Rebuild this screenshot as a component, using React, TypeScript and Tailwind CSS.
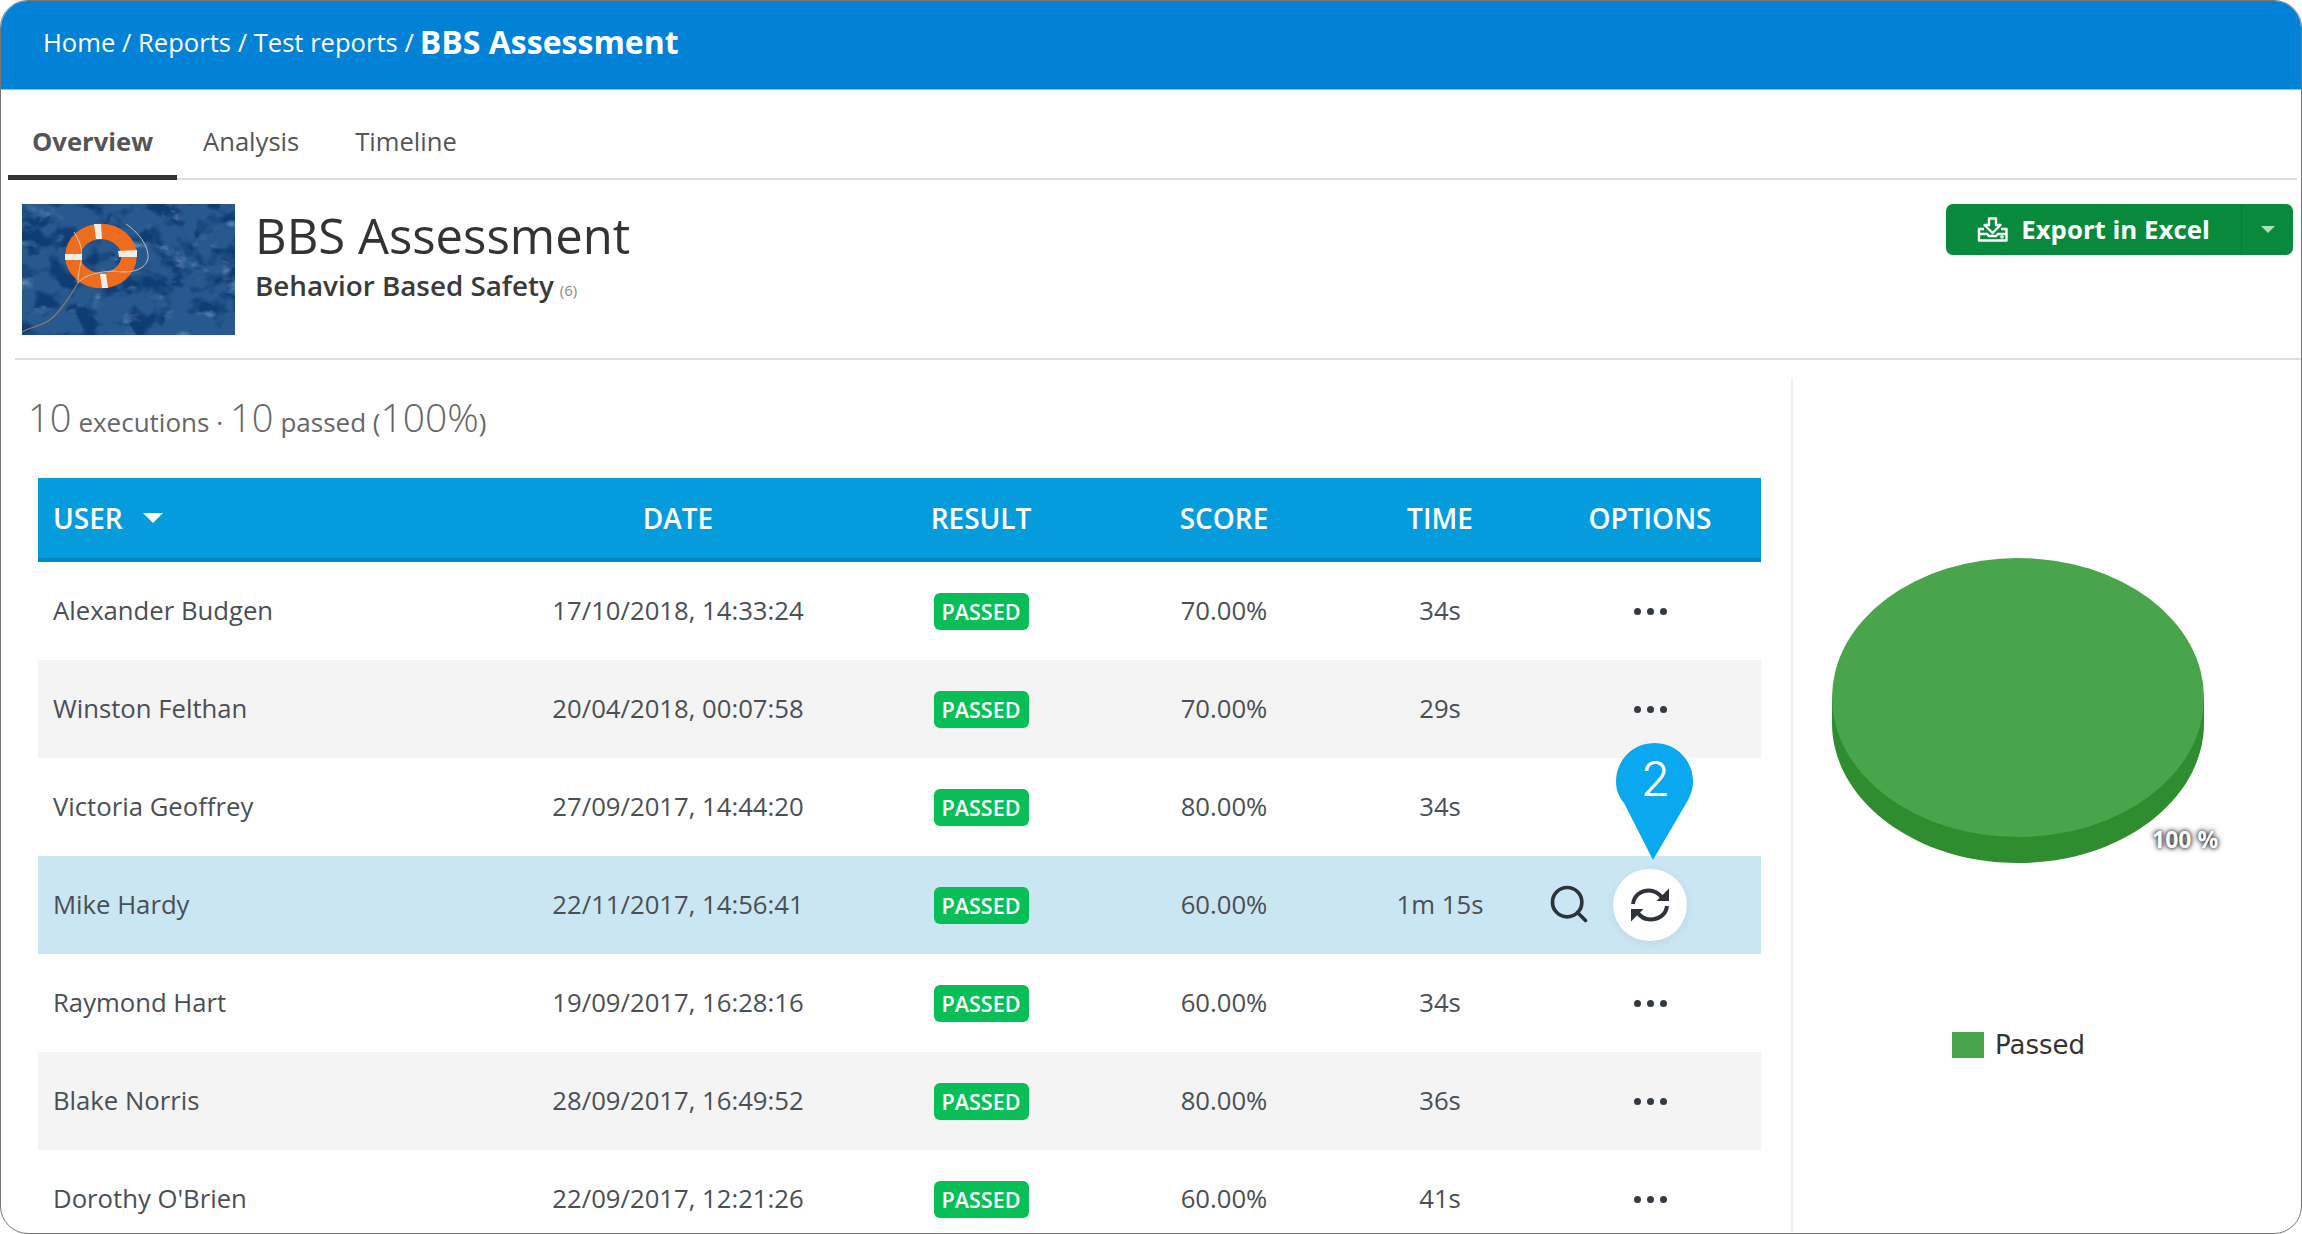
import React from 'react';
import { Search } from 'lucide-react';

type Row = { user: string; date: string; score: string; time: string };

const rows: Row[] = [
  { user: 'Alexander Budgen', date: '17/10/2018, 14:33:24', score: '70.00%', time: '34s' },
  { user: 'Winston Felthan', date: '20/04/2018, 00:07:58', score: '70.00%', time: '29s' },
  { user: 'Victoria Geoffrey', date: '27/09/2017, 14:44:20', score: '80.00%', time: '34s' },
  { user: 'Mike Hardy', date: '22/11/2017, 14:56:41', score: '60.00%', time: '1m 15s' },
  { user: 'Raymond Hart', date: '19/09/2017, 16:28:16', score: '60.00%', time: '34s' },
  { user: 'Blake Norris', date: '28/09/2017, 16:49:52', score: '80.00%', time: '36s' },
  { user: "Dorothy O'Brien", date: '22/09/2017, 12:21:26', score: '60.00%', time: '41s' },
];

const LifebuoyPhoto = () => (
  <svg viewBox="0 0 213 131" className="h-[131px] w-[213px] shrink-0">
    <defs>
      <filter id="water" x="0" y="0" width="100%" height="100%">
        <feTurbulence type="fractalNoise" baseFrequency="0.035 0.055" numOctaves="4" seed="8" />
        <feColorMatrix
          type="matrix"
          values="0 0 0 0 0.2  0 0 0 0 0.38  0 0 0 0 0.6  3 0 0 0 -1.55"
        />
      </filter>
      <filter id="waterDark" x="0" y="0" width="100%" height="100%">
        <feTurbulence type="fractalNoise" baseFrequency="0.04 0.045" numOctaves="3" seed="21" />
        <feColorMatrix
          type="matrix"
          values="0 0 0 0 0.02  0 0 0 0 0.1  0 0 0 0 0.27  0 5 0 0 -1.8"
        />
      </filter>
    </defs>
    <rect width="213" height="131" fill="#103c74" />
    <rect width="213" height="131" filter="url(#water)" />
    <rect width="213" height="131" filter="url(#waterDark)" />
    <path d="M56 79 C48 92 40 106 30 114 C22 122 10 122 0 128" fill="none" stroke="#8a7a62" strokeWidth="1.2" />
    <ellipse cx="79" cy="52" rx="28" ry="24.5" fill="none" stroke="#ee6c1e" strokeWidth="15.5" />
    <path d="M72 20 L79 20 L80 35 L74 35 Z" fill="#f1ece4" />
    <path d="M96 47 L115 46 L115 53 L97 53 Z" fill="#f1ece4" />
    <path d="M43 50 L60 50 L60 56 L43 56 Z" fill="#f1ece4" />
    <path d="M78 70 L84 70 L86 84 L80 84 Z" fill="#f1ece4" />
    <path
      d="M52 28 C58 38 62 46 58 62 C56 72 56 76 56 79 C62 72 72 68 92 67 C108 70 124 66 126 54 C127 42 116 28 104 20"
      fill="none"
      stroke="#e9e2d8"
      strokeOpacity="0.75"
      strokeWidth="1"
    />
  </svg>
);

const ExportIcon = () => (
  <svg viewBox="0 0 31 25" className="h-[25px] w-[31px]" fill="none" stroke="#fff" strokeWidth="2.4">
    <path d="M12 1.500 H19 V8 H23.500 L15.500 16 L7.500 8 H12 Z" strokeLinejoin="round" />
    <path d="M7 12 H2 V23.500 H29.500 V12 H24" strokeLinejoin="round" />
    <path d="M2 17 H10 L12 19 H19 L21 17 H29.500" />
    <circle cx="25" cy="20" r="0.6" fill="#fff" />
  </svg>
);

const RefreshIcon = () => (
  <svg viewBox="0 0 38 34" className="absolute left-[18px] top-[19px] h-[34px] w-[38px]">
    <path d="M2 16 C3 7.500 10 2.500 18 2.500 C23 2.500 27 4.500 31 9.500" fill="none" stroke="#2d3339" strokeWidth="4" />
    <path d="M38 0.500 V13 H25.500 Z" fill="#2d3339" />
    <path d="M36 18 C35 26.500 28 31.500 19.500 31.500 C14.500 31.500 10 29.500 6.500 24.500" fill="none" stroke="#2d3339" strokeWidth="4" />
    <path d="M0 33.500 V21 H12.500 Z" fill="#2d3339" />
  </svg>
);

const Dots = () => (
  <div className="flex items-center gap-[6px]">
    <span className="h-[7px] w-[7px] rounded-full bg-[#333a42]" />
    <span className="h-[7px] w-[7px] rounded-full bg-[#333a42]" />
    <span className="h-[7px] w-[7px] rounded-full bg-[#333a42]" />
  </div>
);

const Pin = () => (
  <div className="absolute left-[1578px] top-[-113px] h-[117px] w-[77px]">
    <svg viewBox="0 0 77 117" className="h-[117px] w-[77px]">
      <path
        d="M38.500 0 C60 0 77 17 77 38.500 C77 48 73 56 68 64 L37 117 L8 60 C3 54 0 47 0 38.500 C0 17 17 0 38.500 0 Z"
        fill="#0aa8ef"
      />
    </svg>
    <span className="absolute left-[1px] top-[6px] w-full text-center font-['Inter',sans-serif] text-[48px] font-light leading-[60px] text-white">
      2
    </span>
  </div>
);

const TableRow = ({ row, index }: { row: Row; index: number }) => {
  const active = index === 3;
  const striped = index % 2 === 1;
  return (
    <div
      className={`relative grid h-[98px] shrink-0 grid-cols-[463px_354px_252px_234px_198px_222px] items-center text-[25.7px] text-[#4a4f55] ${
        active ? 'bg-[#cbe6f3]' : striped ? 'bg-[#f4f4f4]' : 'bg-white'
      }`}
    >
      <div className="pl-[15px]">{row.user}</div>
      <div className="text-center">{row.date}</div>
      <div className="flex justify-center">
        <span className="flex h-[37px] w-[95px] items-center justify-center rounded-[6px] bg-[#07bf56] pt-[2px] text-[21.5px] font-semibold text-white">
          PASSED
        </span>
      </div>
      <div className="text-center">{row.score}</div>
      <div className="text-center">{row.time}</div>
      <div className="flex items-center justify-center">
        {active ? (
          <div className="relative h-[72px] w-[74px] rounded-full bg-white shadow-[0_2px_8px_rgba(0,0,0,0.08)]">
            <Search
              className="absolute left-[-66px] top-[13px] h-[44px] w-[44px] text-[#2d3339]"
              strokeWidth={2}
            />
            <RefreshIcon />
          </div>
        ) : (
          index !== 2 && <Dots />
        )}
      </div>
      {active && <Pin />}
    </div>
  );
};

export default function App() {
  return (
    <div className="flex h-[1234px] w-[2302px] flex-col overflow-hidden rounded-[28px] border-[1.5px] border-[#777] bg-white font-['Open_Sans',sans-serif]">
      <header className="flex h-[89px] shrink-0 items-center border-b border-[#7cc4ec] bg-[#0282d6] pb-[4px] pl-[42px] text-white">
        <span className="text-[25.6px]">Home / Reports / Test reports /</span>
        <span className="mb-[3px] ml-[6px] text-[32px] font-bold">BBS Assessment</span>
      </header>

      <nav className="ml-[7px] mr-[4px] flex h-[90px] shrink-0 items-end border-b-2 border-[#dedede] text-[25.6px] text-[#555]">
        <div className="-mb-[2px] flex h-[90px] w-[169px] items-center border-b-[5px] border-[#333] pl-[24px] pt-[20px] font-bold">
          Overview
        </div>
        <div className="flex h-[88px] items-center pl-[26px] pt-[17px]">Analysis</div>
        <div className="flex h-[88px] items-center pl-[56px] pt-[17px]">Timeline</div>
      </nav>

      <section className="ml-[14px] flex h-[180px] shrink-0 items-start justify-between border-b-2 border-[#dedede] pl-[7px] pr-[8px] pt-[24px]">
        <div className="flex">
          <LifebuoyPhoto />
          <div className="ml-[20px] flex flex-col">
            <h1 className="text-[49px] font-normal leading-[62px] text-[#333]">BBS Assessment</h1>
            <div className="flex items-baseline">
              <span className="text-[27.8px] font-semibold leading-[38px] text-[#3a3a3a]">Behavior Based Safety</span>
              <span className="ml-[6px] text-[15px] text-[#888]">(6)</span>
            </div>
          </div>
        </div>
        <div className="flex h-[51px] w-[347px] items-stretch rounded-[7px] bg-[#088a3c] text-white">
          <div className="flex w-[296px] items-center justify-center gap-[13px] border-r border-[#0a7a37] pb-[1px]">
            <ExportIcon />
            <span className="text-[25.8px] font-bold">Export in Excel</span>
          </div>
          <div className="flex flex-1 items-center justify-center">
            <span className="h-0 w-0 border-x-[7px] border-t-[7px] border-x-transparent border-t-[#a8e0b8]" />
          </div>
        </div>
      </section>

      <div className="flex min-h-0 flex-1">
        <main className="w-[1790px] shrink-0 overflow-hidden">
          <div className="flex h-[118px] items-baseline pl-[27px] pt-[28px] text-[26px] text-[#666]">
            <span className="text-[38px] font-light">10</span>
            <span className="ml-[7px]">executions ·</span>
            <span className="ml-[7px] text-[38px] font-light">10</span>
            <span className="ml-[7px]">passed (</span>
            <span className="text-[39px] font-light">100%</span>
            <span>)</span>
          </div>

          <div className="ml-[37px] flex w-[1723px] flex-col">
            <div className="grid h-[84px] shrink-0 grid-cols-[463px_354px_252px_234px_198px_222px] items-center border-b-[4px] border-[#0587c2] bg-[#059cdd] text-[28px] font-semibold text-white">
              <div className="flex items-center pl-[15px]">
                USER
                <span className="ml-[20px] h-0 w-0 border-x-[10px] border-t-[10px] border-x-transparent border-t-white" />
              </div>
              <div className="text-center">DATE</div>
              <div className="text-center">RESULT</div>
              <div className="text-center">SCORE</div>
              <div className="text-center">TIME</div>
              <div className="text-center">OPTIONS</div>
            </div>
            {rows.map((row, i) => (
              <TableRow key={row.user} row={row} index={i} />
            ))}
          </div>
        </main>

        <aside className="relative mt-[18px] flex-1 border-l-2 border-[#f0f0f0] pl-[39px] pt-[180px]">
          <svg viewBox="0 0 372 305" className="h-[305px] w-[372px]">
            <path d="M0 139.500 V165 C0 242 83 305 186 305 C289 305 372 242 372 165 V139.500 Z" fill="#2e8d2e" />
            <ellipse cx="186" cy="139.500" rx="186" ry="139.500" fill="#48a54b" />
          </svg>
          <span className="absolute left-[359px] top-[446px] text-[23px] font-bold leading-[30px] text-white [text-shadow:0_0_4px_rgba(0,0,0,0.9),0_0_6px_rgba(0,0,0,0.6)]">
            100 %
          </span>
          <div className="ml-[120px] mt-[167px] flex items-center">
            <span className="h-[26px] w-[32px] bg-[#48a54b]" />
            <span className="ml-[11px] font-['DejaVu_Sans',sans-serif] text-[26px] leading-[30px] text-[#333]">
              Passed
            </span>
          </div>
        </aside>
      </div>
    </div>
  );
}
